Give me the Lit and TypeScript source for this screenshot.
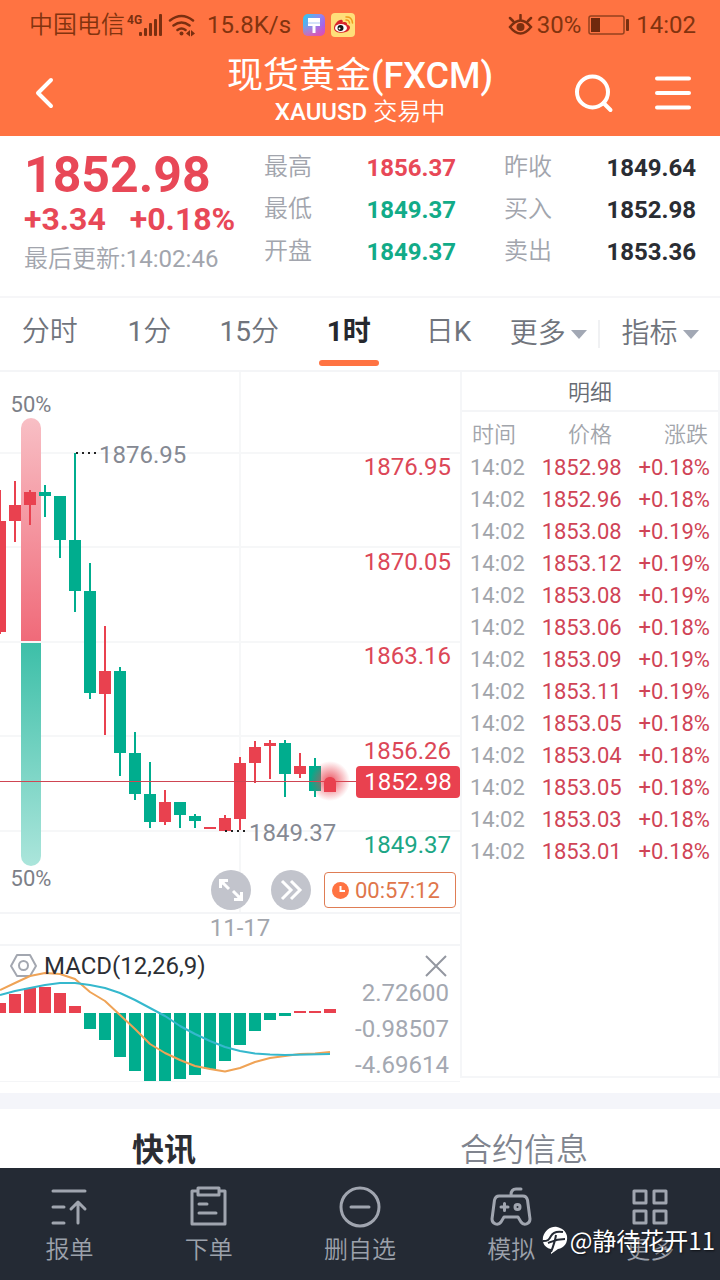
import { LitElement, html, svg, css } from "lit";
import { customElement, state } from "lit/decorators.js";

type Candle = [x: number, high: number, top: number, bottom: number, low: number, up: 0 | 1];

const CANDLES: Candle[] = [
  [0, 490, 521, 632, 634, 1],
  [15, 481, 505, 521, 542, 1],
  [30, 490, 492, 505, 525, 1],
  [45, 485, 492, 496, 517, 0],
  [60, 496, 496, 540, 558, 0],
  [75, 453, 540, 591, 612, 0],
  [90, 563, 591, 693, 699, 0],
  [105, 626, 671, 694, 735, 1],
  [120, 667, 671, 753, 776, 0],
  [135, 732, 753, 794, 800, 0],
  [150, 762, 794, 822, 828, 0],
  [165, 790, 802, 822, 825, 1],
  [180, 802, 802, 815, 828, 0],
  [195, 814, 816, 821, 828, 0],
  [210, 827, 827, 829, 829, 1],
  [225, 815, 818, 831, 831, 1],
  [240, 757, 763, 819, 830, 1],
  [255, 741, 747, 763, 783, 1],
  [270, 740, 743, 746, 779, 1],
  [285, 740, 743, 774, 797, 0],
  [300, 753, 766, 774, 778, 1],
  [315, 758, 766, 791, 797, 0],
];

const MACD_TOP = [1003, 994, 988, 987, 993, 1006];
const MACD_BOTTOM = [1029, 1040, 1057, 1071, 1081, 1081, 1079, 1075, 1069, 1061, 1045, 1031, 1020, 1016];

const TICKS = [
  ["1852.98", "+0.18%"],
  ["1852.96", "+0.18%"],
  ["1853.08", "+0.19%"],
  ["1853.12", "+0.19%"],
  ["1853.08", "+0.19%"],
  ["1853.06", "+0.18%"],
  ["1853.09", "+0.19%"],
  ["1853.11", "+0.19%"],
  ["1853.05", "+0.18%"],
  ["1853.04", "+0.18%"],
  ["1853.05", "+0.18%"],
  ["1853.03", "+0.18%"],
  ["1853.01", "+0.18%"],
];

const STATS = [
  ["最高", "1856.37", "up"],
  ["昨收", "1849.64", ""],
  ["最低", "1849.37", "down"],
  ["买入", "1852.98", ""],
  ["开盘", "1849.37", "down"],
  ["卖出", "1853.36", ""],
];

const AXIS: [string, number, string][] = [
  ["1876.95", 475, "up"],
  ["1870.05", 570, "up"],
  ["1863.16", 664, "up"],
  ["1856.26", 759, "up"],
  ["1849.37", 853, "down"],
];

const softFont = css`Roboto, "Noto Sans CJK SC DemiLight", "Noto Sans CJK SC", sans-serif`;

@customElement("status-bar")
class StatusBar extends LitElement {
  static styles = css`
    :host { display: flex; align-items: center; justify-content: space-between; height: 48px; padding: 2px 24px 0 29px; box-sizing: border-box; color: #82330f; font-size: 24px; line-height: 28px; }
    .group { display: flex; align-items: center; }
    .carrier { font-family: ${softFont}; }
    svg { display: block; }
    .signal { margin-right: 5px; }
    .wifi { margin-right: 12px; }
    .app { margin-left: 12px; }
    .app + .app { margin-left: 6px; }
    .eye { margin-right: 4px; }
    .battery { margin: 0 6px 0 7px; }
  `;
  render() {
    return html`
      <div class="group">
        <span class="carrier">中国电信</span>
        <svg class="signal" width="38" height="28" viewBox="126 10 38 28" fill="#7a2f10">
          <text x="128" y="23" font-size="12" font-weight="700">4G</text>
          <rect x="140" y="31" width="3" height="4" rx="1" /><rect x="145" y="27" width="3" height="8" rx="1" />
          <rect x="150" y="22" width="3" height="13" rx="1" /><rect x="155" y="18" width="3" height="17" rx="1" />
          <rect x="160" y="13" width="3" height="22" rx="1" />
        </svg>
        <svg class="wifi" width="27" height="24" viewBox="169 12 27 24" fill="none" stroke="#7a2f10" stroke-width="2.500" stroke-linecap="round">
          <path d="M171 19.500q11.500-9 23 0M174.500 24.500q8-6 16 0M178.500 29q4-3 8 0" />
          <circle cx="182.500" cy="32.500" r="2" fill="#7a2f10" stroke="none" />
          <path d="M187 32.500l4-3.500v6.500zM196 32.500l-4-3.500v6.500z" fill="#7a2f10" stroke="none" />
        </svg>
        <span>15.8K/s</span>
        <svg class="app" width="22" height="22" viewBox="0 0 22 22">
          <defs><linearGradient id="brush" x1="0" x2="1" y1="0.200" y2="0.800"><stop offset="0" stop-color="#39c3ee" /><stop offset="0.500" stop-color="#8e8bf0" /><stop offset="1" stop-color="#b44be0" /></linearGradient>
          <linearGradient id="warm" x1="0" x2="0" y1="1" y2="0"><stop offset="0" stop-color="#ff4f8a" /><stop offset="0.500" stop-color="#ff5f9a" stop-opacity="0" /></linearGradient></defs>
          <rect width="22" height="22" rx="5" fill="url(#brush)" /><rect width="22" height="22" rx="5" fill="url(#warm)" opacity="0.600" />
          <path d="M5 4h12v8h-4.500v7h-3v-7H5z" fill="#fff" /><path d="M5 9h12" stroke="#a9c6f2" />
        </svg>
        <svg class="app" width="24" height="24" viewBox="0 0 24 24">
          <rect width="24" height="24" rx="4" fill="#ffdf7a" />
          <path d="M3 15c0-4 5-9 8-8 1 .5 1 1.500.5 2.500 3-1 5 0 4.500 2 3 1 4 3 2 5.500-3 4-15 4-15-2z" fill="#d8232a" />
          <ellipse cx="10" cy="15" rx="6" ry="4" fill="#fff" /><circle cx="9.500" cy="15" r="3" fill="#161616" /><circle cx="8.500" cy="15.500" r="1" fill="#fff" />
          <path d="M15 7q3-.5 3.500 3M15 4q6-.5 6.500 6" fill="none" stroke="#f19a1c" stroke-width="1.500" stroke-linecap="round" />
        </svg>
      </div>
      <div class="group">
        <svg class="eye" width="26" height="22" viewBox="508 13 26 22" fill="none" stroke="#7a2f10" stroke-width="2.500" stroke-linecap="round">
          <path d="M511 26q10.500-13 21 0-10.500 13-21 0zM521.500 18v-4M514 20l-3-3M529 20l3-3" />
          <circle cx="521.500" cy="26" r="4" fill="#7a2f10" stroke="none" />
        </svg>
        <span>30%</span>
        <svg class="battery" width="42" height="20" viewBox="588 14 42 20">
          <rect x="589" y="15" width="35" height="18" rx="2" fill="none" stroke="#95421e" stroke-width="1.500" />
          <rect x="591" y="17" width="9" height="14" fill="#70290d" /><rect x="626" y="18" width="3" height="12" rx="1" fill="#7a2f10" />
        </svg>
        <span>14:02</span>
      </div>
    `;
  }
}

@customElement("app-header")
class AppHeader extends LitElement {
  static styles = css`
    :host { display: grid; grid-template-columns: 1fr auto 1fr; align-items: center; height: 88px; padding: 2px 28px 0; box-sizing: border-box; color: #fff; }
    button { border: 0; background: none; padding: 0; color: inherit; display: block; }
    svg { display: block; fill: none; stroke: #fff; stroke-width: 4; stroke-linecap: round; stroke-linejoin: round; }
    .titles { text-align: center; padding-bottom: 4px; }
    h1, p { margin: 0; font-weight: 400; }
    h1 { font-size: 36px; line-height: 42px; }
    p { font-size: 24px; line-height: 30px; font-family: ${softFont}; }
    .latin { font-weight: 500; }
    .actions { display: flex; justify-content: flex-end; gap: 36px; }
  `;
  render() {
    return html`
      <button aria-label="返回"><svg width="32" height="40" viewBox="28 73 32 40"><path d="M51 80L38 93l13 13" /></svg></button>
      <div class="titles">
        <h1>现货黄金<span class="latin">(FXCM)</span></h1>
        <p><span class="latin">XAUUSD</span> 交易中</p>
      </div>
      <div class="actions">
        <button aria-label="搜索"><svg width="44" height="40" viewBox="572 73 44 40"><circle cx="592.500" cy="92" r="15.500" /><path d="M603.500 103l7 7" /></svg></button>
        <button aria-label="菜单"><svg width="40" height="40" viewBox="652 73 40 40"><path d="M657 78.500h32M657 93h32M657 107.500h32" /></svg></button>
      </div>
    `;
  }
}

@customElement("quote-panel")
class QuotePanel extends LitElement {
  static styles = css`
    :host { display: grid; grid-template-columns: 264fr 456fr; height: 162px; padding-top: 11px; box-sizing: border-box; border-bottom: 2px solid #f6f6f8; }
    .main { padding: 1px 0 0 24px; color: #e84857; white-space: nowrap; font-weight: 700; }
    .price { font-size: 50px; line-height: 54px; }
    .change { display: flex; gap: 24px; font-size: 32px; line-height: 34px; }
    .time { font-family: ${softFont}; font-weight: 400; font-size: 24px; line-height: 28px; color: #a2a5ad; padding-top: 9px; }
    .stats { display: grid; grid-template-columns: 1fr 1fr; grid-auto-rows: 42px; column-gap: 48px; margin: 0; padding-right: 24px; font-size: 24px; line-height: 42px; }
    .stats div { display: flex; justify-content: space-between; }
    dt { font-family: ${softFont}; color: #a2a5ad; line-height: 40px; }
    dd { margin: 0; color: #2a2d33; font-weight: 700; }
    dd.up { color: #e84857; }
    dd.down { color: #12ab88; }
  `;
  render() {
    return html`
      <div class="main">
        <div class="price">1852.98</div>
        <div class="change"><span>+3.34</span><span>+0.18%</span></div>
        <div class="time">最后更新:14:02:46</div>
      </div>
      <dl class="stats">
        ${STATS.map(([name, value, tone]) => html`<div><dt>${name}</dt><dd class=${tone}>${value}</dd></div>`)}
      </dl>
    `;
  }
}

@customElement("period-tabs")
class PeriodTabs extends LitElement {
  static styles = css`
    :host { display: grid; grid-template-columns: repeat(6, 299fr) 366fr; height: 74px; box-sizing: border-box; border-bottom: 2px solid #f4f5f7; }
    button { border: 0; background: none; padding: 0; font-family: ${softFont}; font-size: 28px; line-height: 68px; color: #70747c; display: flex; justify-content: center; align-items: stretch; position: relative; }
    .active { font-family: inherit; font-weight: 700; color: #25282e; }
    .active::after { content: ""; position: absolute; left: 50%; bottom: 4px; width: 60px; height: 6px; margin-left: -30px; border-radius: 3px; background: #ff7342; }
    .menu { align-items: center; gap: 5px; }
    .menu::after { content: ""; border: 8px solid transparent; border-bottom: 0; border-top: 9px solid #a2a8b4; }
    .rule { border-left: 2px solid #f0f1f3; align-self: center; height: 28px; }
  `;
  @state() private active = "1时";
  render() {
    return html`
      ${["分时", "1分", "15分", "1时", "日K"].map(
        (t) => html`<button class=${t === this.active ? "active" : ""} @click=${() => (this.active = t)}>${t}</button>`
      )}
      <button class="menu">更多</button>
      <button class="menu rule">指标</button>
    `;
  }
}

@customElement("price-chart")
class PriceChart extends LitElement {
  static styles = css`
    :host { display: block; }
    svg { display: block; width: 100%; }
    .plot { position: relative; border-bottom: 2px solid #f4f5f7; }
    .grid { stroke: #f6f7f8; stroke-width: 2; fill: none; }
    .up { fill: #e9414f; }
    .down { fill: #00ad8e; }
    .axis { font-size: 24px; text-anchor: end; }
    .axis.up { fill: #dc4757; }
    .axis.down { fill: #1ca685; }
    .mark { font-size: 24px; fill: #858993; }
    .share { font-size: 22px; fill: #7c8088; text-anchor: middle; }
    .tag { font-size: 24px; fill: #fff; text-anchor: middle; }
    .current { fill: #cf4552; }
    .dots { stroke: #222; stroke-width: 2; stroke-dasharray: 2 4; }
    .tools { position: absolute; right: 4px; bottom: 2px; display: flex; align-items: center; }
    button { border: 0; padding: 0; width: 40px; height: 40px; border-radius: 50%; background: #c2c4cc; margin-right: 20px; }
    .next { margin-right: 13px; }
    button svg, .timer svg { fill: none; stroke: #fff; stroke-width: 3; }
    .timer { display: flex; align-items: center; gap: 6px; width: 132px; height: 36px; box-sizing: border-box; padding-left: 7px; border: 1px solid #df7d55; border-radius: 4px; background: #fff; color: #e0764b; font-size: 22px; }
    .timer svg { width: 17px; height: 17px; stroke-width: 2; }
    .date { height: 32px; box-sizing: border-box; padding-left: 20px; text-align: center; font-size: 24px; line-height: 29px; color: #a3a6ad; border-bottom: 2px solid #f4f5f7; }
    .macd { position: relative; border-bottom: 1px solid #f4f5f7; }
    .legend { font-size: 24px; fill: #2c2f35; }
    .scale { font-size: 24px; fill: #a4a8b1; text-anchor: end; }
    .line { fill: none; stroke-width: 2; stroke-linejoin: round; }
    .close { position: absolute; top: 8px; right: 12px; width: 24px; height: 24px; background: none; margin: 0; }
    .close svg { stroke: #9397a0; stroke-width: 2; }
  `;
  render() {
    return html`
      <div class="plot">
        <svg viewBox="0 372 460 540">
          <defs>
            <linearGradient id="sell" x1="0" x2="0" y1="0" y2="1"><stop offset="0" stop-color="#f8bfc5" /><stop offset="1" stop-color="#f06a79" /></linearGradient>
            <linearGradient id="buy" x1="0" x2="0" y1="0" y2="1"><stop offset="0" stop-color="#3dbfa8" /><stop offset="1" stop-color="#abe5db" /></linearGradient>
            <radialGradient id="glow"><stop offset="0" stop-color="#e9414f" stop-opacity="0.900" /><stop offset="0.450" stop-color="#e9414f" stop-opacity="0.500" /><stop offset="1" stop-color="#e9414f" stop-opacity="0" /></radialGradient>
          </defs>
          <path class="grid" d="M0 453H460M0 547H460M0 642H460M0 736H460M0 831H460M240 372V912" />
          <path d="M21 641V428a10 10 0 0 1 20 0V641z" fill="url(#sell)" />
          <path d="M21 643V856a10 10 0 0 0 20 0V643z" fill="url(#buy)" />
          ${CANDLES.map(
            ([x, high, top, bottom, low, up]) => svg`<g class=${up ? "up" : "down"}>
              <rect x=${x - 1} y=${high} width="2" height=${low - high} />
              <rect x=${x - 6} y=${top} width="12" height=${bottom - top} /></g>`
          )}
          <rect class="current" x="0" y="781" width="356" height="1" />
          <circle cx="330" cy="781" r="20" fill="url(#glow)" />
          <path class="up" d="M324 792v-9c0-4 3-6 6-6s6 2 6 6v9z" />
          <path class="dots" d="M76 453H96M225 831H246" />
          <text class="mark" x="99" y="463">1876.95</text>
          <text class="mark" x="249" y="841">1849.37</text>
          <text class="share" x="31" y="412">50%</text>
          <text class="share" x="31" y="886">50%</text>
          ${AXIS.map(([t, y, tone]) => svg`<text class="axis ${tone}" x="451" y=${y}>${t}</text>`)}
          <rect x="356" y="766" width="104" height="32" rx="4" class="up" />
          <text class="tag" x="408" y="790">1852.98</text>
        </svg>
        <div class="tools">
          <button aria-label="全屏"><svg viewBox="211 870 40 40"><path d="M220.500 888v-7.500h7.500M222 882l7 7M241.500 892v7.500H234M240 898l-7-7" /><path d="M220 880h7l-7 7zM242 900h-7l7-7z" fill="#fff" stroke="none" /></svg></button>
          <button class="next" aria-label="最新"><svg viewBox="271 870 40 40"><path d="M282 881l9 9-9 9M291 881l9 9-9 9" /></svg></button>
          <div class="timer"><svg viewBox="0 0 17 17"><circle cx="8.500" cy="8.500" r="8.500" fill="#ff7342" stroke="none" /><path d="M8.500 4v5H13" /></svg><span>00:57:12</span></div>
        </div>
      </div>
      <div class="date">11-17</div>
      <div class="macd">
        <svg viewBox="0 946 460 135">
          <path d="M17 955h13l6 11-6 10H17l-6-10z" fill="none" stroke="#a3a7b0" stroke-width="2" stroke-linejoin="round" />
          <circle cx="23.500" cy="965.500" r="4.500" fill="none" stroke="#a3a7b0" stroke-width="2" />
          ${MACD_TOP.map((y, i) => svg`<rect class="up" x=${i * 15 - 6} y=${y} width="12" height=${1013 - y} />`)}
          ${MACD_BOTTOM.map((y, i) => svg`<rect class="down" x=${i * 15 + 84} y="1013" width="12" height=${y - 1013} />`)}
          <path class="up" d="M294 1011h12v2h-12zM309 1011h12v2h-12zM324 1009h12v4h-12z" />
          <path class="line" stroke="#efa356" d="M0 990L15 983 30 976 45 973 60 974 75 979 90 992 105 1001 120 1015 135 1029 150 1044 165 1053 180 1060 195 1066 210 1069 225 1071.500 240 1068 255 1062 270 1058 285 1056 300 1054 315 1053.500 330 1052" />
          <path class="line" stroke="#35b8cd" d="M0 995L15 991 30 988 45 985 60 983 75 983 90 985 105 988 120 993 135 1000 150 1008 165 1016 180 1026 195 1034 210 1041 225 1047 240 1051 255 1053.500 270 1054.500 285 1055 330 1054" />
          <text class="legend" x="44" y="974">MACD(12,26,9)</text>
          <text class="scale" x="449" y="1001">2.72600</text>
          <text class="scale" x="449" y="1037">-0.98507</text>
          <text class="scale" x="449" y="1073">-4.69614</text>
        </svg>
        <button class="close" aria-label="关闭"><svg viewBox="0 0 24 24"><path d="M2 2l20 20M22 2L2 22" /></svg></button>
      </div>
    `;
  }
}

@customElement("tick-list")
class TickList extends LitElement {
  static styles = css`
    :host { display: block; border: 2px solid #f5f6f8; border-top: 0; font-family: ${softFont}; font-size: 22px; margin-bottom: 4px; }
    h2 { margin: 0; font-size: 22px; font-weight: 400; line-height: 42px; height: 40px; box-sizing: border-box; text-align: center; color: #676b73; border-bottom: 2px solid #f4f5f7; }
    table, thead, tbody { display: block; }
    tr { display: flex; justify-content: space-between; padding: 0 8px; line-height: 32px; height: 32px; }
    thead tr { padding: 2px 10px 0; height: 40px; line-height: 41px; box-sizing: border-box; }
    th, td { padding: 0; font-weight: 400; color: #a2a5ab; }
    .up { color: #d04456; }
  `;
  render() {
    return html`
      <h2>明细</h2>
      <table>
        <thead><tr><th>时间</th><th>价格</th><th>涨跌</th></tr></thead>
        <tbody>
          ${TICKS.map(([p, c]) => html`<tr><td>14:02</td><td class="up">${p}</td><td class="up">${c}</td></tr>`)}
        </tbody>
      </table>
    `;
  }
}

@customElement("bottom-nav")
class BottomNav extends LitElement {
  static styles = css`
    :host { display: block; position: relative; background: #242a34; font-family: ${softFont}; }
    nav { display: flex; justify-content: space-around; height: 112px; padding-top: 17px; box-sizing: border-box; }
    a { display: flex; flex-direction: column; align-items: center; gap: 5px; text-decoration: none; color: #9ca1ab; font-size: 24px; line-height: 32px; }
    a svg { display: block; width: 44px; height: 44px; fill: none; stroke: #a0a5af; stroke-width: 3; stroke-linecap: round; stroke-linejoin: round; }
    .mark { position: absolute; right: 5px; bottom: 24px; display: flex; align-items: center; gap: 2px; color: #fff; font-family: "Noto Sans CJK SC", sans-serif; font-size: 24px; line-height: 32px; text-shadow: 1px 1px 2px #0009; }
    .mark svg { width: 26px; height: 28px; display: block; }
  `;
  render() {
    return html`
      <nav>
        <a href="#report"><svg viewBox="0 0 44 44"><path d="M5 6h32M5 22h11M5 38h11M30 38V18M23 24l7-7 7 7" /></svg>报单</a>
        <a href="#order"><svg viewBox="0 0 44 44"><path d="M11 6H5v33h33V6h-6M11 3h21v7H11zM12 19h8M12 28h17" /></svg>下单</a>
        <a href="#remove"><svg viewBox="0 0 44 44"><circle cx="22" cy="22" r="19" /><path d="M13 22h18" /></svg>删自选</a>
        <a href="#demo"><svg viewBox="0 0 44 44"><path d="M22 10c0-4 2-6 5-6h5M10 11h24c3 0 4 2 4.500 4l2.500 19c0 5-6 7-9 3l-3-5H15l-3 5c-3 4-9 2-9-3l2.500-19c.5-2 1.500-4 4.500-4zM12 22h7M15.500 18.500v7" /><circle cx="28.500" cy="22" r="2.500" /></svg>模拟</a>
        <a href="#more"><svg viewBox="0 0 44 44"><path d="M6 6h12v12H6zM26 6h12v12H26zM6 26h12v12H6zM26 26h12v12H26z" /></svg>更多</a>
      </nav>
      <div class="mark">
        <svg viewBox="0 0 26 28"><path d="M9 28v-5C3 22 0 17 1 11 3 4 9 0 15 1c5 1 9 4 10 9 1 7-3 12-9 13z" fill="#fff" /><path d="M1 15c5 0 6-1 8-5 2-4 6-5 12-4M6 17c5-2 8-4 17-4M14 9c-1 7-3 12-5 17" fill="none" stroke="#242a34" stroke-width="2" /></svg>
        <span>@静待花开11</span>
      </div>
    `;
  }
}

@customElement("app-root")
class AppRoot extends LitElement {
  static styles = css`
    :host { display: flex; flex-direction: column; height: 100vh; overflow: hidden; background: #fff; font-family: Roboto, "Noto Sans CJK SC", sans-serif; }
    .top { background: #ff7342; }
    main { flex: 1; min-height: 0; overflow-y: auto; scrollbar-width: none; }
    .market { display: grid; grid-template-columns: 460fr 260fr; }
    .info { display: grid; grid-template-columns: 1fr 1fr; margin-top: 11px; border-top: 16px solid #f4f5fa; }
    .info button { border: 0; background: none; padding: 0 32px 0 0; height: 76px; font-family: ${softFont}; font-size: 32px; color: #80848e; }
    .info .on { font-family: inherit; font-weight: 700; color: #2b2d33; }
  `;
  render() {
    return html`
      <header class="top"><status-bar></status-bar><app-header></app-header></header>
      <main>
        <quote-panel></quote-panel>
        <period-tabs></period-tabs>
        <section class="market"><price-chart></price-chart><tick-list></tick-list></section>
        <section class="info"><button class="on">快讯</button><button>合约信息</button></section>
      </main>
      <bottom-nav></bottom-nav>
    `;
  }
}
